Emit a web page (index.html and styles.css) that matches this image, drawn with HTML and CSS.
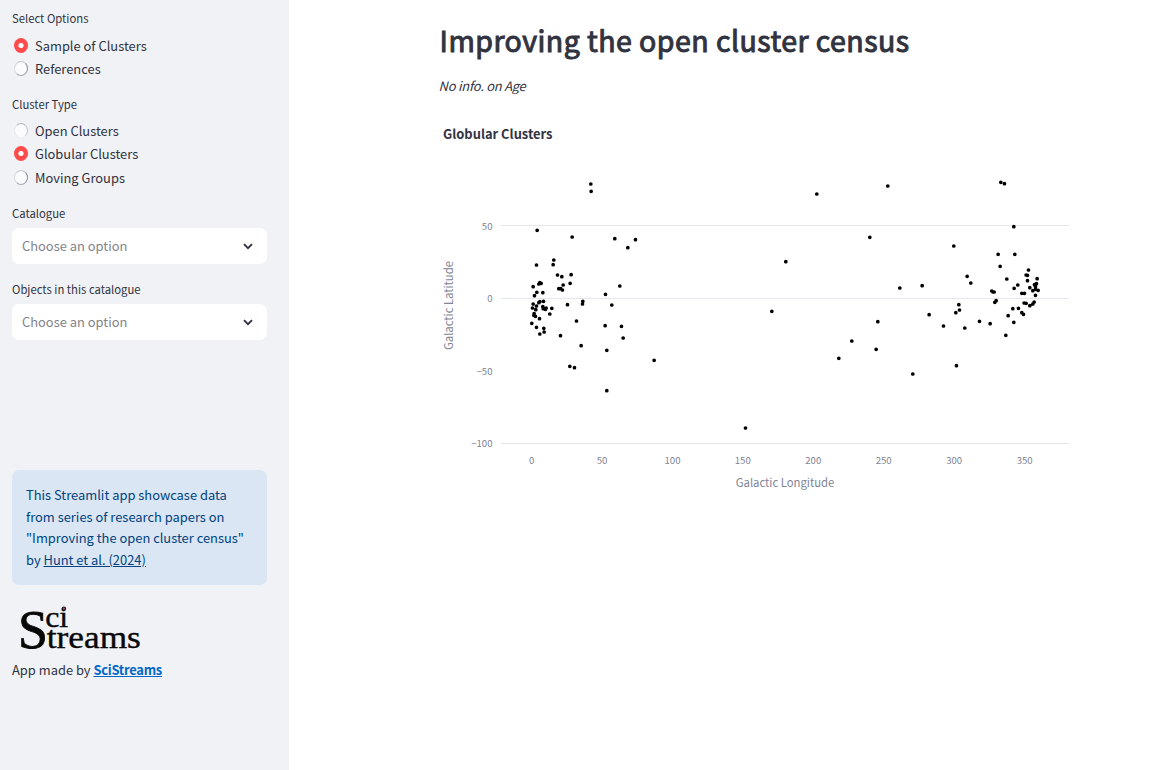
FILE: index.html
```html
<!DOCTYPE html>
<html lang="en">
<head>
<meta charset="utf-8">
<title>Improving the open cluster census</title>
<link rel="stylesheet" href="styles.css">
</head>
<body>
<div class="app">
  <aside class="sidebar">
    <div class="group group-first">
      <div class="label">Select Options</div>
      <label class="radio"><span class="dot on"></span><span>Sample of Clusters</span></label>
      <label class="radio"><span class="dot"></span><span>References</span></label>
    </div>
    <div class="group group-type">
      <div class="label">Cluster Type</div>
      <label class="radio"><span class="dot faint"></span><span>Open Clusters</span></label>
      <label class="radio"><span class="dot on"></span><span>Globular Clusters</span></label>
      <label class="radio last"><span class="dot"></span><span>Moving Groups</span></label>
    </div>
    <div class="field">
      <div class="label">Catalogue</div>
      <div class="select"><span>Choose an option</span><svg width="10" height="7" viewBox="0 0 10 7"><path d="M1 1.2 5 5.2 9 1.2" fill="none" stroke="#31333f" stroke-width="1.9"/></svg></div>
    </div>
    <div class="field">
      <div class="label">Objects in this catalogue</div>
      <div class="select"><span>Choose an option</span><svg width="10" height="7" viewBox="0 0 10 7"><path d="M1 1.2 5 5.2 9 1.2" fill="none" stroke="#31333f" stroke-width="1.9"/></svg></div>
    </div>
    <div class="info">This Streamlit app showcase data<br>from series of research papers on<br>"Improving the open cluster census"<br>by <a href="#">Hunt et al. (2024)</a></div>
    <svg class="logo" width="130" height="50" viewBox="12 603 130 50">
      <g class="logo-text">
        <text class="logo-s" x="18" y="647.7" font-size="54" textLength="30" lengthAdjust="spacingAndGlyphs">S</text>
        <text x="45.2" y="627" font-size="29" textLength="23" lengthAdjust="spacingAndGlyphs">ci</text>
        <text x="46.8" y="647.7" font-size="32" textLength="94" lengthAdjust="spacingAndGlyphs">treams</text>
      </g>
      <circle cx="63.9" cy="608.6" r="2.2" fill="#171018"/>
      <circle cx="63.9" cy="608.6" r="1.1" fill="#b04a87"/>
    </svg>
    <p class="credit">App made by <a href="#">SciStreams</a></p>
  </aside>
  <main class="main">
    <h1 class="title">Improving the open cluster census</h1>
    <p class="note">No info. on Age</p>
    <h2 class="chart-title">Globular Clusters</h2>
    <svg class="chart" width="640" height="340" viewBox="440 160 640 340">
      <g fill="none">
        <path d="M501 225.5H1069M501 443.5H1069" stroke="#e6e7ea"/>
        <path d="M501 298.5H1069" stroke="#e1e7f1"/>
      </g>
      <g class="tick tick-y">
        <text x="492.5" y="230">50</text>
        <text x="492.5" y="302">0</text>
        <text x="492.5" y="375">−50</text>
        <text x="492.5" y="447">−100</text>
      </g>
      <g class="tick tick-x">
        <text x="531.7" y="464">0</text>
        <text x="602" y="464">50</text>
        <text x="672.5" y="464">100</text>
        <text x="742.8" y="464">150</text>
        <text x="813.3" y="464">200</text>
        <text x="883.7" y="464">250</text>
        <text x="954.2" y="464">300</text>
        <text x="1024.7" y="464">350</text>
      </g>
      <text class="axis" x="785" y="487" textLength="98.5">Galactic Longitude</text>
      <text class="axis" transform="translate(453 305.5) rotate(-90)" textLength="89">Galactic Latitude</text>
      <g class="points" transform="translate(430.15 170) scale(.33333)">
        <path transform="translate(270 150)" d="M51 31h0M156 51h0M284 56h0M346 59h0M323 83h0M101 120h0M99 134h0M49 135h0M112 165h0M125 170h0M153 164h0M150 190h0M129 195h0M116 206h0M122 206h0M127 210h0M39 200h0M56 192h0M59 188h0M63 190h0M50 217h0M68 218h0M43 227h0M299 198h0M256 223h0M275 255h0M142 254h0M188 244h0M187 252h0M59 245h0M70 244h0M56 248h0M39 252h0M49 258h0M37 264h0M47 269h0M68 260h0M69 266h0M78 264h0M76 268h0M95 265h0M42 281h0M41 286h0M46 289h0M89 282h0M58 296h0M35 310h0M49 322h0M71 325h0M72 336h0M59 342h0M121 347h0M169 303h0M183 377h0M255 317h0M304 319h0M309 354h0"/>
        <path d="M482 42h0M483 64h0M419 589h0M433 593h0M530 541h0M530 662h0M672 571h0"/>
        <path transform="translate(660 0)" d="M500 72h0M713 48h0M659 202h0M407 275h0M365 424h0M605 513h0M566 565h0M678 538h0M683 455h0M286 774h0"/>
        <path transform="translate(1290 0)" d="M422 37h0M433 41h0M281 228h0M119 354h0M186 347h0M321 319h0M332 339h0M296 404h0M298 420h0M287 428h0M207 434h0M250 468h0M314 474h0M358 454h0M390 461h0M289 587h0M158 612h0M437 496h0"/>
        <path transform="translate(1650 150)" d="M101 20h0M54 103h0M104 103h0M60 139h0M80 177h0M145 150h0M138 165h0M142 166h0M142 182h0M171 176h0M113 195h0M102 205h0M149 203h0M163 194h0M169 191h0M166 200h0M158 212h0M166 208h0M174 211h0M166 226h0M125 220h0M133 220h0M35 213h0M39 216h0M42 216h0M48 242h0M44 247h0M132 249h0M138 250h0M162 246h0M158 252h0M149 257h0M98 266h0M115 265h0M125 278h0M130 283h0M84 287h0M101 307h0"/>
      </g>
    </svg>
  </main>
</div>
</body>
</html>
```
FILE: styles.css
```css
* { box-sizing: border-box; }
body {
  margin: 0;
  color: #31333f;
  background: #fff;
  font: 12.9px/21.6px "Noto Sans CJK SC", "Noto Sans", sans-serif;
}
h1, h2, p { margin: 0; }
.app { display: flex; height: 770px; overflow: hidden; }
.sidebar {
  width: 289px;
  flex: none;
  padding: 8px 22px 0 12px;
  background: #f0f2f6;
  display: flex;
  flex-direction: column;
}
.label { font-size: 11.3px; line-height: 20px; white-space: nowrap; }
.group-first { height: 86px; }
.group-first .label { margin-bottom: 6px; }
.group-type { height: 109px; }
.group-type .label { margin-bottom: 5px; }
.radio { display: flex; align-items: center; gap: 7px; height: 23px; padding-left: 2px; }
.radio.last { height: 25px; }
.dot {
  width: 14px;
  height: 15px;
  margin-top: -1px;
  border-radius: 50%;
  background: #fbfbfd;
  border: 1px solid;
  border-color: #c6c8ce #8f9199 #a7a9b0 #d8dae0;
}
.dot.faint { border-color: #b5b7be #c5c7cd #eceef2 #e5e7eb; }
.dot.on { border: 0; background: radial-gradient(circle, #fff 2.2px, #ff4b4b 3px); }
.field { height: 76px; }
.field .label { margin-bottom: 5px; }
.select {
  height: 36px;
  border-radius: 7px;
  background: #fff;
  color: #83848c;
  padding: 0 14px 0 10px;
  display: flex;
  align-items: center;
  justify-content: space-between;
}
.info {
  margin-top: 115px;
  height: 115px;
  padding: 14px;
  border-radius: 7px;
  background: #dae6f4;
  color: #004280;
  white-space: nowrap;
}
.info a { color: inherit; }
.logo { display: block; margin-top: 18px; overflow: visible; }
.logo-text { font-family: "Liberation Serif", serif; fill: #080808; stroke: #080808; stroke-width: .4; }
.logo-s { stroke-width: .8; }
.credit { margin-top: 6px; }
.credit a { color: #0068c9; font-weight: 700; letter-spacing: -.25px; }
.main { flex: 1; padding: 15px 0 0 151px; }
.title {
  margin-left: -.4px;
  font-size: 28.5px;
  line-height: 50px;
  font-weight: 400;
  letter-spacing: .46px;
  -webkit-text-stroke: 1px #31333f;
  white-space: nowrap;
}
.note { margin: 10px 0 0 -1.4px; font-style: italic; letter-spacing: -.22px; }
.chart-title { margin: 26px 0 0 3px; font-size: 12.9px; line-height: 22px; font-weight: 700; }
.chart { display: block; margin-top: 15px; }
.tick { font-size: 9.6px; fill: #808495; }
.tick-y { text-anchor: end; }
.tick-x { text-anchor: middle; }
.axis { font-size: 11.3px; fill: #808495; text-anchor: middle; }
.points { fill: none; stroke: #000; stroke-width: 11.2; stroke-linecap: round; }
```
